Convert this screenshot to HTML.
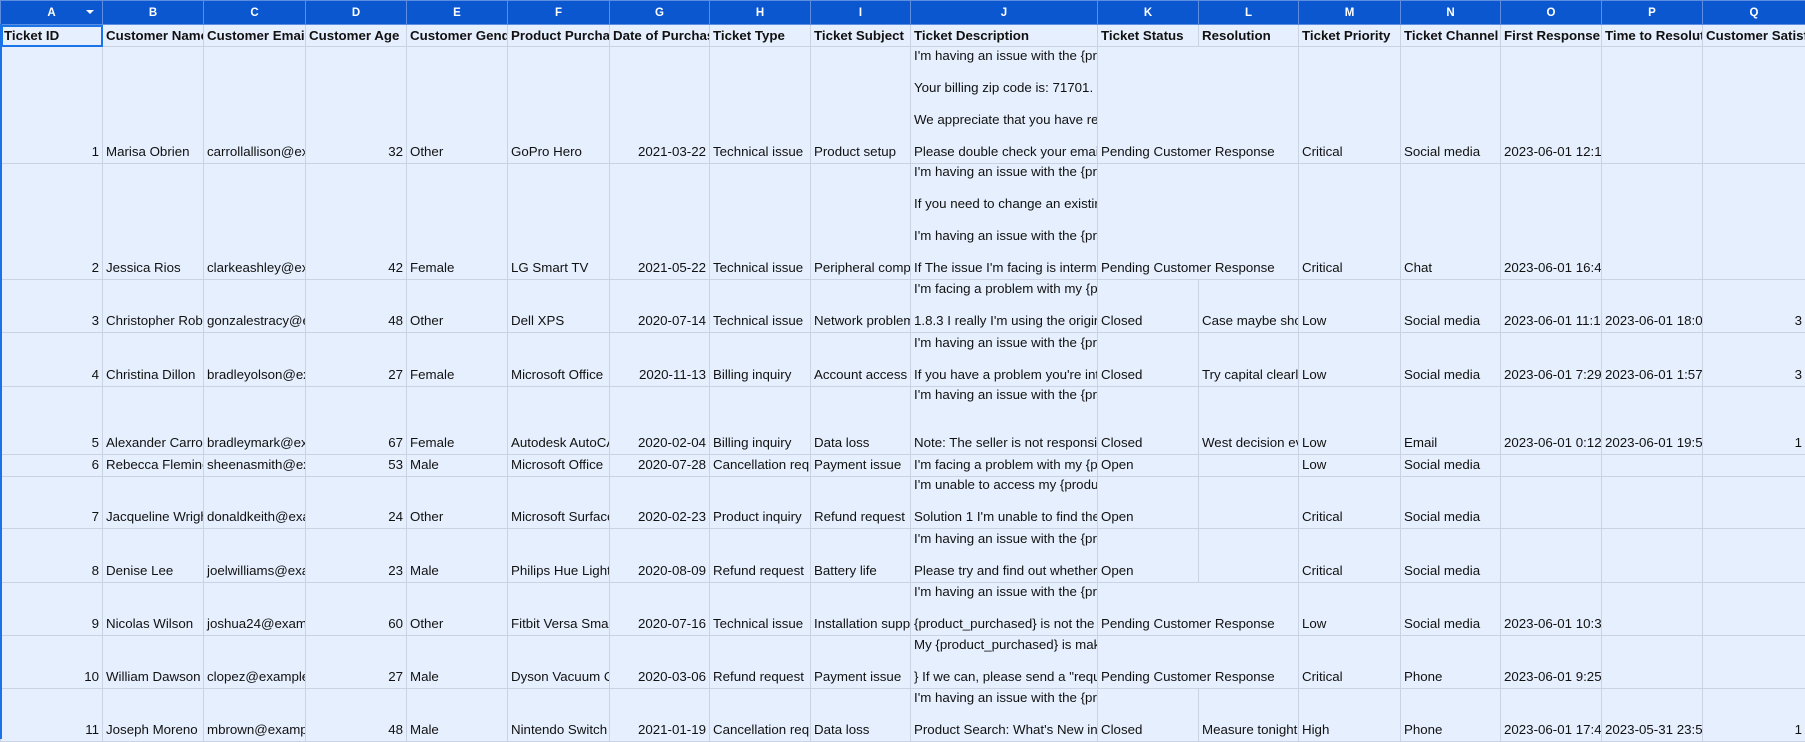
<!DOCTYPE html>
<html><head><meta charset="utf-8"><style>
*{margin:0;padding:0;box-sizing:border-box}
body{width:1805px;height:739px;overflow:hidden;background:#e6effd;font-family:"Liberation Sans",Arial,sans-serif;font-size:13.3px;color:#111}
table{border-collapse:collapse;table-layout:fixed;position:absolute;left:0;top:0;width:1805px}
td{border:1px solid #c9d3e3;padding:0;vertical-align:bottom;background:#e6effd;overflow:hidden;max-width:0}
td div{overflow:hidden;white-space:pre;line-height:16px;padding:0 3px 3px 3px;display:flex;flex-direction:column;justify-content:flex-end;width:100%}
td div span{display:block;white-space:pre;overflow:hidden}
tr.let td{background:#0b57d0;border:1px solid #5c8de0;color:#fff;font-weight:bold;font-size:11.5px;text-align:center;vertical-align:middle;height:24px}
tr.hd td{font-weight:bold;height:22px}
tr.hd td div{height:21px;padding-bottom:2px}
.r{text-align:right}
.r div{align-items:flex-end}
.sel{outline:2px solid #1a73e8;outline-offset:-2px}
</style></head><body>
<div style="position:absolute;left:0;top:24px;width:2px;height:715px;background:#1a73e8;z-index:2"></div>
<table>
<colgroup>
<col style="width:102px"><col style="width:101px"><col style="width:102px"><col style="width:101px"><col style="width:101px"><col style="width:102px"><col style="width:100px"><col style="width:101px"><col style="width:100px"><col style="width:187px"><col style="width:101px"><col style="width:100px"><col style="width:102px"><col style="width:100px"><col style="width:101px"><col style="width:101px"><col style="width:103px">
</colgroup>
<tr class="let"><td style="position:relative">A<span style="position:absolute;right:8px;top:9px;width:0;height:0;border-left:4px solid transparent;border-right:4px solid transparent;border-top:4px solid #fff"></span></td><td>B</td><td>C</td><td>D</td><td>E</td><td>F</td><td>G</td><td>H</td><td>I</td><td>J</td><td>K</td><td>L</td><td>M</td><td>N</td><td>O</td><td>P</td><td>Q</td></tr>
<tr class="hd"><td class="sel"><div>Ticket ID</div></td><td><div>Customer Name</div></td><td><div>Customer Email</div></td><td><div>Customer Age</div></td><td><div>Customer Gender</div></td><td><div>Product Purchased</div></td><td><div>Date of Purchase</div></td><td><div>Ticket Type</div></td><td><div>Ticket Subject</div></td><td><div>Ticket Description</div></td><td><div>Ticket Status</div></td><td><div>Resolution</div></td><td><div>Ticket Priority</div></td><td><div>Ticket Channel</div></td><td><div>First Response Time</div></td><td><div>Time to Resolution</div></td><td><div>Customer Satisfaction Rating</div></td></tr>

<tr style="height:117px"><td class="r"><div style="height:116px">1</div></td><td><div style="height:116px">Marisa Obrien</div></td><td><div style="height:116px">carrollallison@example.com</div></td><td class="r"><div style="height:116px">32</div></td><td><div style="height:116px">Other</div></td><td><div style="height:116px">GoPro Hero</div></td><td class="r"><div style="height:116px">2021-03-22</div></td><td><div style="height:116px">Technical issue</div></td><td><div style="height:116px">Product setup</div></td><td><div style="height:116px">I'm having an issue with the {product_purchased}

Your billing zip code is: 71701.

We appreciate that you have requested

Please double check your email</div></td><td colspan="2"><div style="height:116px">Pending Customer Response</div></td><td><div style="height:116px">Critical</div></td><td><div style="height:116px">Social media</div></td><td><div style="height:116px">2023-06-01 12:15:36</div></td><td><div style="height:116px"></div></td><td class="r"><div style="height:116px"></div></td></tr>

<tr style="height:116px"><td class="r"><div style="height:115px">2</div></td><td><div style="height:115px">Jessica Rios</div></td><td><div style="height:115px">clarkeashley@example.com</div></td><td class="r"><div style="height:115px">42</div></td><td><div style="height:115px">Female</div></td><td><div style="height:115px">LG Smart TV</div></td><td class="r"><div style="height:115px">2021-05-22</div></td><td><div style="height:115px">Technical issue</div></td><td><div style="height:115px">Peripheral compatibility</div></td><td><div style="height:115px">I'm having an issue with the {product_purchased}

If you need to change an existing

I'm having an issue with the {product_purchased}

If The issue I'm facing is intermittent</div></td><td colspan="2"><div style="height:115px">Pending Customer Response</div></td><td><div style="height:115px">Critical</div></td><td><div style="height:115px">Chat</div></td><td><div style="height:115px">2023-06-01 16:45:38</div></td><td><div style="height:115px"></div></td><td class="r"><div style="height:115px"></div></td></tr>

<tr style="height:53px"><td class="r"><div style="height:52px">3</div></td><td><div style="height:52px">Christopher Robbins</div></td><td><div style="height:52px">gonzalestracy@example.com</div></td><td class="r"><div style="height:52px">48</div></td><td><div style="height:52px">Other</div></td><td><div style="height:52px">Dell XPS</div></td><td class="r"><div style="height:52px">2020-07-14</div></td><td><div style="height:52px">Technical issue</div></td><td><div style="height:52px">Network problem</div></td><td><div style="height:52px">I'm facing a problem with my {product_purchased}

1.8.3 I really I'm using the original</div></td><td><div style="height:52px">Closed</div></td><td><div style="height:52px">Case maybe show</div></td><td><div style="height:52px">Low</div></td><td><div style="height:52px">Social media</div></td><td><div style="height:52px">2023-06-01 11:14:38</div></td><td><div style="height:52px">2023-06-01 18:05:38</div></td><td class="r"><div style="height:52px">3</div></td></tr>

<tr style="height:54px"><td class="r"><div style="height:53px">4</div></td><td><div style="height:53px">Christina Dillon</div></td><td><div style="height:53px">bradleyolson@example.org</div></td><td class="r"><div style="height:53px">27</div></td><td><div style="height:53px">Female</div></td><td><div style="height:53px">Microsoft Office</div></td><td class="r"><div style="height:53px">2020-11-13</div></td><td><div style="height:53px">Billing inquiry</div></td><td><div style="height:53px">Account access</div></td><td><div style="height:53px">I'm having an issue with the {product_purchased}

If you have a problem you're interested</div></td><td><div style="height:53px">Closed</div></td><td><div style="height:53px">Try capital clearly</div></td><td><div style="height:53px">Low</div></td><td><div style="height:53px">Social media</div></td><td><div style="height:53px">2023-06-01 7:29:40</div></td><td><div style="height:53px">2023-06-01 1:57:40</div></td><td class="r"><div style="height:53px">3</div></td></tr>

<tr style="height:68px"><td class="r"><div style="height:67px">5</div></td><td><div style="height:67px">Alexander Carroll</div></td><td><div style="height:67px">bradleymark@example.com</div></td><td class="r"><div style="height:67px">67</div></td><td><div style="height:67px">Female</div></td><td><div style="height:67px">Autodesk AutoCAD</div></td><td class="r"><div style="height:67px">2020-02-04</div></td><td><div style="height:67px">Billing inquiry</div></td><td><div style="height:67px">Data loss</div></td><td><div style="height:67px">I'm having an issue with the {product_purchased}


Note: The seller is not responsible</div></td><td><div style="height:67px">Closed</div></td><td><div style="height:67px">West decision evening</div></td><td><div style="height:67px">Low</div></td><td><div style="height:67px">Email</div></td><td><div style="height:67px">2023-06-01 0:12:42</div></td><td><div style="height:67px">2023-06-01 19:53:42</div></td><td class="r"><div style="height:67px">1</div></td></tr>

<tr style="height:22px"><td class="r"><div style="height:21px">6</div></td><td><div style="height:21px">Rebecca Fleming</div></td><td><div style="height:21px">sheenasmith@example.com</div></td><td class="r"><div style="height:21px">53</div></td><td><div style="height:21px">Male</div></td><td><div style="height:21px">Microsoft Office</div></td><td class="r"><div style="height:21px">2020-07-28</div></td><td><div style="height:21px">Cancellation request</div></td><td><div style="height:21px">Payment issue</div></td><td><div style="height:21px">I'm facing a problem with my {product_purchased}</div></td><td><div style="height:21px">Open</div></td><td><div style="height:21px"></div></td><td><div style="height:21px">Low</div></td><td><div style="height:21px">Social media</div></td><td><div style="height:21px"></div></td><td><div style="height:21px"></div></td><td class="r"><div style="height:21px"></div></td></tr>

<tr style="height:52px"><td class="r"><div style="height:51px">7</div></td><td><div style="height:51px">Jacqueline Wright</div></td><td><div style="height:51px">donaldkeith@example.org</div></td><td class="r"><div style="height:51px">24</div></td><td><div style="height:51px">Other</div></td><td><div style="height:51px">Microsoft Surface</div></td><td class="r"><div style="height:51px">2020-02-23</div></td><td><div style="height:51px">Product inquiry</div></td><td><div style="height:51px">Refund request</div></td><td><div style="height:51px">I'm unable to access my {product_purchased}

Solution 1 I'm unable to find the</div></td><td><div style="height:51px">Open</div></td><td><div style="height:51px"></div></td><td><div style="height:51px">Critical</div></td><td><div style="height:51px">Social media</div></td><td><div style="height:51px"></div></td><td><div style="height:51px"></div></td><td class="r"><div style="height:51px"></div></td></tr>

<tr style="height:54px"><td class="r"><div style="height:53px">8</div></td><td><div style="height:53px">Denise Lee</div></td><td><div style="height:53px">joelwilliams@example.com</div></td><td class="r"><div style="height:53px">23</div></td><td><div style="height:53px">Male</div></td><td><div style="height:53px">Philips Hue Lights</div></td><td class="r"><div style="height:53px">2020-08-09</div></td><td><div style="height:53px">Refund request</div></td><td><div style="height:53px">Battery life</div></td><td><div style="height:53px">I'm having an issue with the {product_purchased}

Please try and find out whether</div></td><td><div style="height:53px">Open</div></td><td><div style="height:53px"></div></td><td><div style="height:53px">Critical</div></td><td><div style="height:53px">Social media</div></td><td><div style="height:53px"></div></td><td><div style="height:53px"></div></td><td class="r"><div style="height:53px"></div></td></tr>

<tr style="height:53px"><td class="r"><div style="height:52px">9</div></td><td><div style="height:52px">Nicolas Wilson</div></td><td><div style="height:52px">joshua24@example.com</div></td><td class="r"><div style="height:52px">60</div></td><td><div style="height:52px">Other</div></td><td><div style="height:52px">Fitbit Versa Smartwatch</div></td><td class="r"><div style="height:52px">2020-07-16</div></td><td><div style="height:52px">Technical issue</div></td><td><div style="height:52px">Installation support</div></td><td><div style="height:52px">I'm having an issue with the {product_purchased}

{product_purchased} is not the</div></td><td colspan="2"><div style="height:52px">Pending Customer Response</div></td><td><div style="height:52px">Low</div></td><td><div style="height:52px">Social media</div></td><td><div style="height:52px">2023-06-01 10:32:47</div></td><td><div style="height:52px"></div></td><td class="r"><div style="height:52px"></div></td></tr>

<tr style="height:53px"><td class="r"><div style="height:52px">10</div></td><td><div style="height:52px">William Dawson</div></td><td><div style="height:52px">clopez@example.com</div></td><td class="r"><div style="height:52px">27</div></td><td><div style="height:52px">Male</div></td><td><div style="height:52px">Dyson Vacuum Cleaner</div></td><td class="r"><div style="height:52px">2020-03-06</div></td><td><div style="height:52px">Refund request</div></td><td><div style="height:52px">Payment issue</div></td><td><div style="height:52px">My {product_purchased} is making

} If we can, please send a "request</div></td><td colspan="2"><div style="height:52px">Pending Customer Response</div></td><td><div style="height:52px">Critical</div></td><td><div style="height:52px">Phone</div></td><td><div style="height:52px">2023-06-01 9:25:48</div></td><td><div style="height:52px"></div></td><td class="r"><div style="height:52px"></div></td></tr>

<tr style="height:53px"><td class="r"><div style="height:52px">11</div></td><td><div style="height:52px">Joseph Moreno</div></td><td><div style="height:52px">mbrown@example.org</div></td><td class="r"><div style="height:52px">48</div></td><td><div style="height:52px">Male</div></td><td><div style="height:52px">Nintendo Switch</div></td><td class="r"><div style="height:52px">2021-01-19</div></td><td><div style="height:52px">Cancellation request</div></td><td><div style="height:52px">Data loss</div></td><td><div style="height:52px">I'm having an issue with the {product_purchased}

Product Search: What's New in</div></td><td><div style="height:52px">Closed</div></td><td><div style="height:52px">Measure tonight</div></td><td><div style="height:52px">High</div></td><td><div style="height:52px">Phone</div></td><td><div style="height:52px">2023-06-01 17:46:49</div></td><td><div style="height:52px">2023-05-31 23:51:49</div></td><td class="r"><div style="height:52px">1</div></td></tr>
</table>
</body></html>
